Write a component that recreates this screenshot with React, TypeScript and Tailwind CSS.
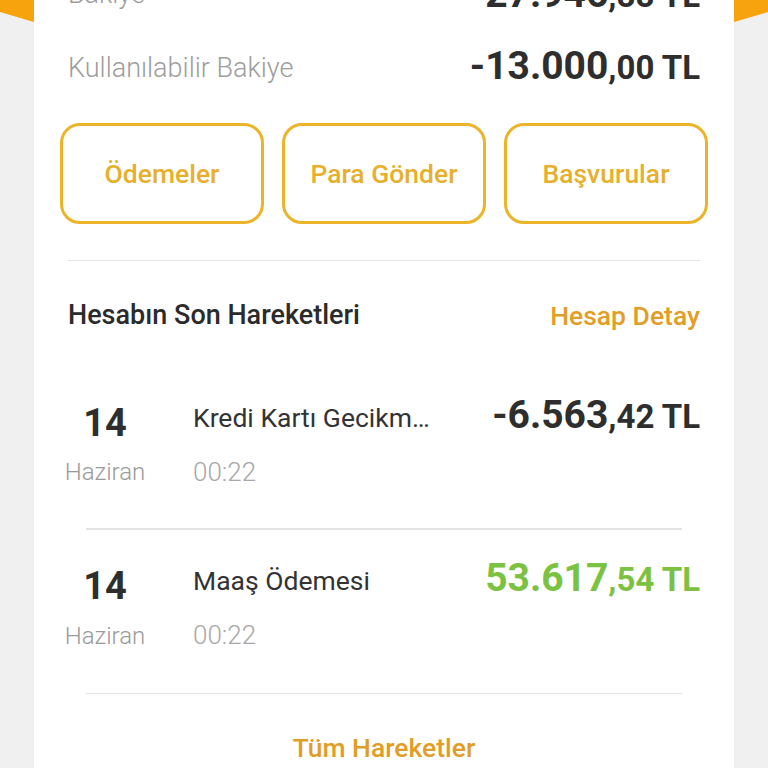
import React from "react"

function Amount({ main, rest, color }: { main: string; rest: string; color: string }) {
  return (
    <div className={`font-bold leading-none whitespace-nowrap ${color}`}>
      <span className="text-[39px]">{main}</span>
      <span className="text-[33px]">{rest}</span>
    </div>
  )
}

function TxRow({ title, amount }: { title: string; amount: React.ReactNode }) {
  return (
    <div className="flex">
      <div className="w-[90px] ml-[-8px] flex flex-col items-center">
        <div className="h-[40px] mt-[3px] flex items-center text-[38px] font-bold text-[#2e2e2e]">14</div>
        <div className="h-[36px] mt-[11px] flex items-center text-[24px] font-light text-[#9a9a9a]">Haziran</div>
      </div>
      <div className="ml-[43px] flex-1 flex flex-col">
        <div className="h-[40px] flex items-center text-[26.5px] text-[#333] mt-[-3px]">{title}</div>
        <div className="h-[36px] mt-[17px] flex items-center text-[26px] font-light text-[#a8a8a8]">00:22</div>
      </div>
      <div className="h-[40px] flex items-center mt-[-5px]">{amount}</div>
    </div>
  )
}

export default function App() {
  return (
    <div
      className="relative w-[768px] h-[768px] overflow-hidden bg-[#f1f0f0]"
      style={{ fontFamily: "Roboto, 'Noto Sans', sans-serif" }}
    >
      <svg className="absolute top-0 left-0" width="768" height="140" viewBox="0 0 768 140">
        <path d="M0 0 H768 V12 Q384 131 0 12 Z" fill="#f6a30d" />
      </svg>

      <div className="relative mx-[34px] h-full bg-white px-[34px] flex flex-col">
        <div className="-mt-[42px]">
          <div className="h-[72px] flex items-center justify-between">
            <div className="text-[27px] font-light text-[#9d9d9d]">Bakiye</div>
            <Amount main="27.946" rest=",88 TL" color="text-[#2e2e2e]" />
          </div>
          <div className="h-[72px] flex items-center justify-between">
            <div className="text-[27px] font-light text-[#9d9d9d] mt-[4px]">Kullanılabilir Bakiye</div>
            <Amount main="-13.000" rest=",00 TL" color="text-[#2e2e2e]" />
          </div>
        </div>

        <div className="mt-[21px] mx-[-8px] grid grid-cols-3 gap-[18px]">
          {["Ödemeler", "Para Gönder", "Başvurular"].map((b) => (
            <div
              key={b}
              className="h-[101px] rounded-[20px] border-[3px] border-[#ecb42a] flex items-center justify-center text-[26.5px] font-medium text-[#e6b02e]"
            >
              {b}
            </div>
          ))}
        </div>

        <div className="mt-[36px] h-[2px] bg-[#e4e4e4]" />

        <div className="mt-[34px] h-[40px] flex items-center justify-between">
          <div className="text-[27px] font-medium text-[#2b2b2b]">Hesabın Son Hareketleri</div>
          <div className="text-[26.5px] font-medium text-[#e29d26]">Hesap Detay</div>
        </div>

        <div className="mt-[65px]">
          <TxRow
            title="Kredi Kartı Gecikm…"
            amount={<Amount main="-6.563" rest=",42 TL" color="text-[#2e2e2e]" />}
          />
        </div>

        <div className="mx-[18px] mt-[38px] h-[2px] bg-[#e4e4e4]" />

        <div className="mt-[34px]">
          <TxRow
            title="Maaş Ödemesi"
            amount={<Amount main="53.617" rest=",54 TL" color="text-[#7cc242]" />}
          />
        </div>

        <div className="mx-[18px] mt-[39px] h-[2px] bg-[#e4e4e4]" />

        <div className="mt-[34px] h-[40px] flex items-center justify-center text-[26.5px] font-medium text-[#e29d26]">
          Tüm Hareketler
        </div>
      </div>
    </div>
  )
}
